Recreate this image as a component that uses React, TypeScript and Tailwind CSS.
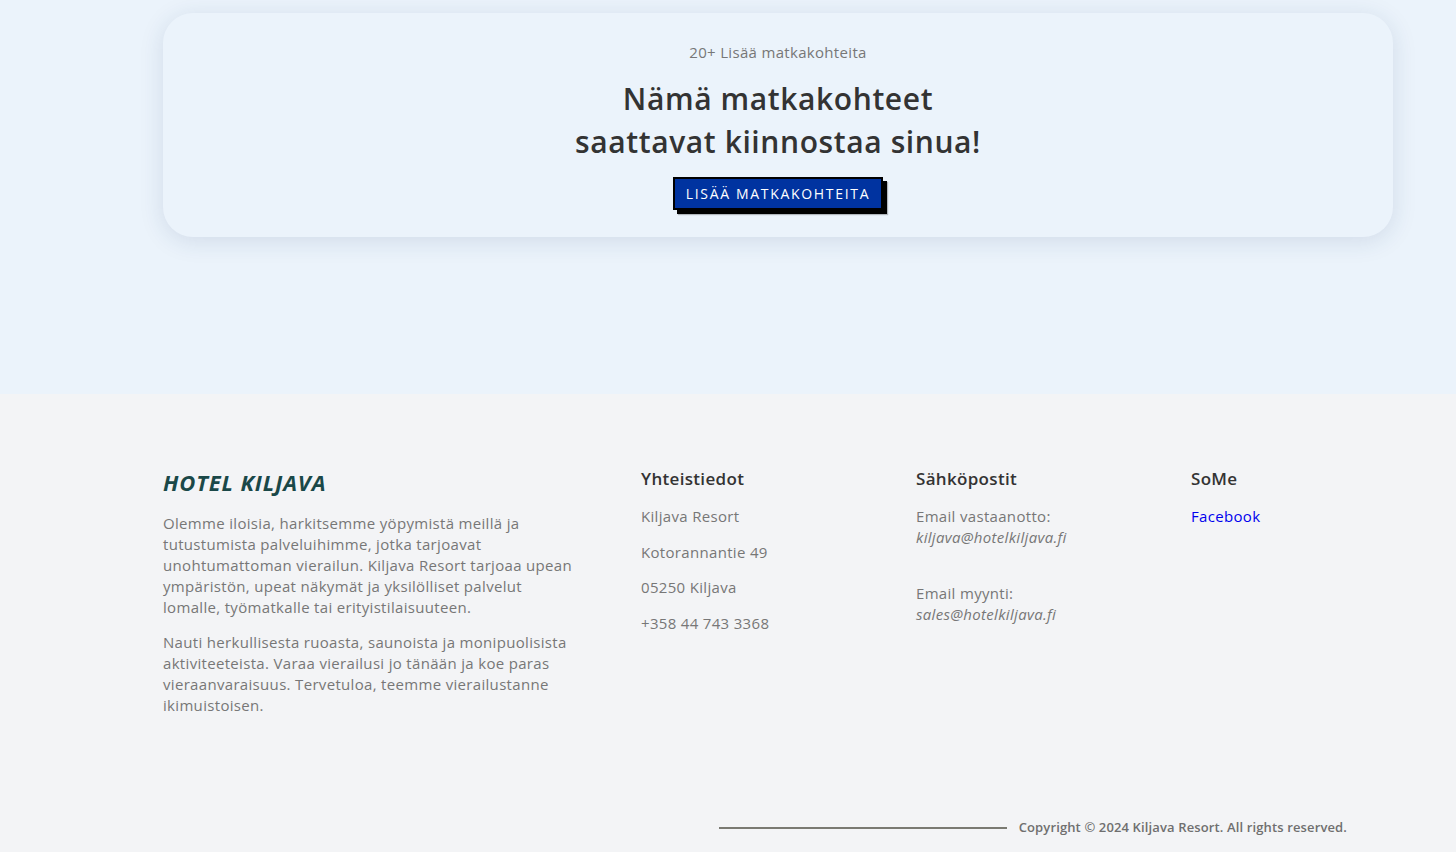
import React from 'react';

const font = { fontFamily: '"Open Sans", "Liberation Sans", sans-serif' };

export default function App() {
  return (
    <div style={font} className="min-h-screen w-full bg-[#f3f4f6] tracking-[0.02em]">
      {/* Destinations teaser */}
      <section className="bg-[#ebf3fb] pt-[13px] h-[394px]">
        <div className="ml-[163px] mr-[63px] rounded-[30px] bg-[#ebf3fb] shadow-[0_4px_24px_rgba(30,60,110,0.13)] h-[224px] flex flex-col items-center pt-[28px]">
          <p className="text-[15px] font-medium text-[#777777] leading-[22px]">20+ Lisää matkakohteita</p>
          <h2 className="mt-[14px] text-center text-[30px] font-semibold leading-[43px] text-[#333333] tracking-[0.02em]">
            Nämä matkakohteet
            <br />
            saattavat kiinnostaa sinua!
          </h2>
          <button className="mt-[14px] h-[33px] px-[11px] bg-[#0033a0] border-2 border-black shadow-[4px_4px_0_#000,5px_5px_1px_rgba(0,0,0,0.25)] text-white text-[14px] tracking-[0.12em] leading-none">
            LISÄÄ MATKAKOHTEITA
          </button>
        </div>
      </section>

      {/* Footer */}
      <footer className="bg-[#f3f4f6] pl-[163px] pr-[63px] pt-[68px]">
        <div className="flex">
          <div className="w-[478px]">
            <h3 className="text-[22px] italic font-bold text-[#1a4848] leading-[40px] tracking-[0.04em]">HOTEL KILJAVA</h3>
            <p className="mt-[11px] w-[410px] text-[15px] leading-[21px] text-[#777777]">
              Olemme iloisia, harkitsemme yöpymistä meillä ja tutustumista palveluihimme, jotka tarjoavat unohtumattoman vierailun. Kiljava Resort tarjoaa upean ympäristön, upeat näkymät ja yksilölliset palvelut lomalle, työmatkalle tai erityistilaisuuteen.
            </p>
            <p className="mt-[14px] w-[410px] text-[15px] leading-[21px] text-[#777777]">
              Nauti herkullisesta ruoasta, saunoista ja monipuolisista aktiviteeteista. Varaa vierailusi jo tänään ja koe paras vieraanvaraisuus. Tervetuloa, teemme vierailustanne ikimuistoisen.
            </p>
          </div>

          <div className="w-[275px] pt-[2px]">
            <h4 className="text-[17px] font-semibold text-[#333333] leading-[30px]">Yhteistiedot</h4>
            <ul className="mt-[12px] flex flex-col gap-[14.5px] text-[15px] leading-[21px] text-[#777777]">
              <li>Kiljava Resort</li>
              <li>Kotorannantie 49</li>
              <li>05250 Kiljava</li>
              <li>+358 44 743 3368</li>
            </ul>
          </div>

          <div className="w-[275px] pt-[2px]">
            <h4 className="text-[17px] font-semibold text-[#333333] leading-[30px]">Sähköpostit</h4>
            <div className="mt-[12px] text-[15px] leading-[21px] text-[#777777]">
              <p>Email vastaanotto:</p>
              <p className="italic">kiljava@hotelkiljava.fi</p>
              <p className="mt-[35px]">Email myynti:</p>
              <p className="italic">sales@hotelkiljava.fi</p>
            </div>
          </div>

          <div className="flex-1 pt-[2px]">
            <h4 className="text-[17px] font-semibold text-[#333333] leading-[30px]">SoMe</h4>
            <a href="#" className="mt-[12px] block text-[15px] leading-[21px] text-[#0000ee]">Facebook</a>
          </div>
        </div>

        <div className="mt-[100px] flex items-center justify-end pr-[46px] h-[24px]">
          <div className="w-[288px] h-[2px] bg-[#7a7a72]" />
          <p className="ml-[12px] text-[13px] font-semibold text-[#6f6f6f] tracking-[0.01em]">
            Copyright © 2024 Kiljava Resort. All rights reserved.
          </p>
        </div>
      </footer>
    </div>
  );
}
